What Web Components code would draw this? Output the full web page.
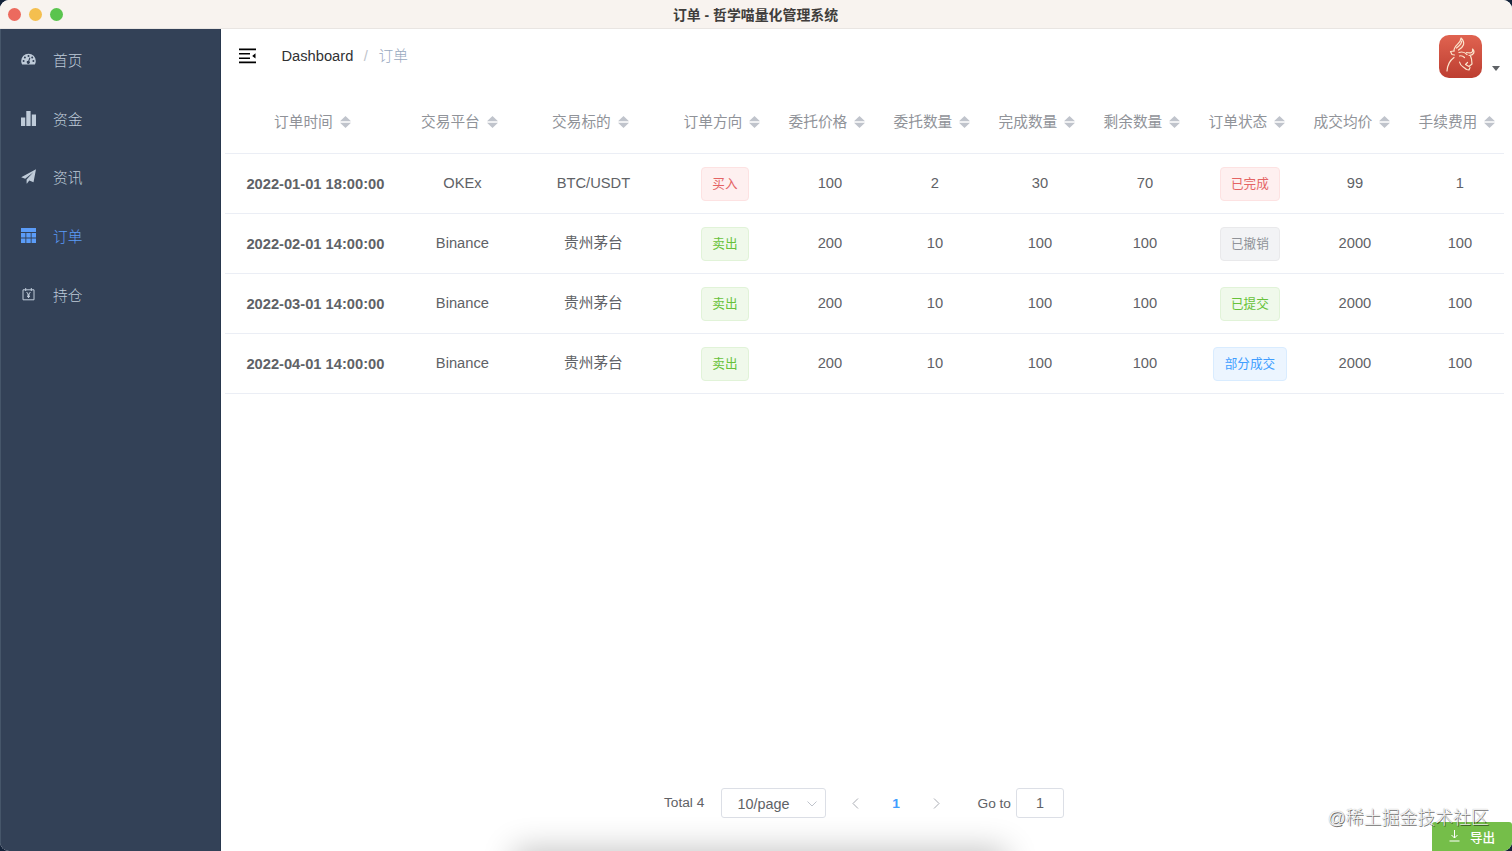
<!DOCTYPE html>
<html lang="zh">
<head>
<meta charset="utf-8">
<title>订单 - 哲学喵量化管理系统</title>
<style>
  html, body { margin: 0; height: 100%; overflow: hidden; background: #14233a; }
  body { font-family: "Liberation Sans", "Noto Sans CJK SC", sans-serif; font-size: 14.7px; color: #606266; }
</style>
</head>
<body>
<app-window>
  <title-bar slot="title">订单 - 哲学喵量化管理系统</title-bar>
  <side-menu slot="menu">
    <menu-item icon="dashboard">首页</menu-item>
    <menu-item icon="chart">资金</menu-item>
    <menu-item icon="plane">资讯</menu-item>
    <menu-item icon="grid" active>订单</menu-item>
    <menu-item icon="yen">持仓</menu-item>
  </side-menu>
  <nav-bar><span>Dashboard</span><span slot="current">订单</span></nav-bar>
  <order-table></order-table>
  <page-footer></page-footer>
  <export-button slot="float">导出</export-button>
  <water-mark slot="float">@稀土掘金技术社区</water-mark>
</app-window>

<script>
// clase base: monta el template en el shadow root
class BaseElement extends HTMLElement {
  constructor () {
    super();
    this.attachShadow({ mode: 'open' });
  }
  connectedCallback () {
    const template = document.createElement('template');
    template.innerHTML = `<style>${this.getStyles()}</style>${this.getTemplate()}`;
    this.shadowRoot.appendChild(template.content.cloneNode(true));
  }
}

class AppWindow extends BaseElement {
  getTemplate () {
    return `
      <slot name="title"></slot>
      <div class="body">
        <slot name="menu"></slot>
        <main><slot></slot></main>
      </div>
      <div class="shade"></div>
      <slot name="float"></slot>
    `;
  }
  getStyles () {
    return `
      :host { display: flex; flex-direction: column; height: 100vh; position: relative; overflow: hidden; border-radius: 9px; background: #fff; }
      .body { flex: 1; display: flex; min-height: 0; }
      main { flex: 1; min-width: 0; display: flex; flex-direction: column; }
      .shade { position: absolute; left: 522px; top: 857px; width: 476px; height: 30px; box-shadow: 0 0 32px 8px rgba(0,0,0,.24); }
    `;
  }
}

class TitleBar extends BaseElement {
  getTemplate () {
    return `
      <div class="dots"><i></i><i></i><i></i></div>
      <b><slot></slot></b>
      <div></div>
    `;
  }
  getStyles () {
    return `
      :host { display: grid; grid-template-columns: 1fr auto 1fr; align-items: center; height: 29px; box-sizing: border-box; padding: 0 9px 0 8px; background: #f8f3ef; border-bottom: 1px solid #e9e5e2; color: #403d3b; font-size: 13.900px; flex: none; }
      .dots { display: flex; gap: 8px; padding-top: 1px; }
      i { width: 13px; height: 13px; border-radius: 50%; background: #ec6a5e; }
      i:nth-child(2) { background: #f4bf4f; }
      i:nth-child(3) { background: #5ac44e; }
      b { line-height: 18px; padding-top: 1px; }
    `;
  }
}

class SideMenu extends BaseElement {
  getTemplate () { return '<slot></slot>'; }
  getStyles () {
    return `
      :host { display: flex; flex-direction: column; width: 221px; flex: none; box-sizing: border-box; padding-top: 2px; background: #334157; border-left: 1px solid #46566a; border-right: 1px solid #29384e; }
    `;
  }
}

const icons = {
  dashboard: '<path fill-rule="evenodd" d="M.2 9a7.3 7.3 0 0 1 14.6 0c0 1.6-.5 2.7-1 3.5H1.200C.7 11.700.2 10.600.2 9ZM7.500 3a1 1 0 1 0 0 2 1 1 0 0 0 0-2Zm-3.600 1.500a1 1 0 1 0 0 2 1 1 0 0 0 0-2ZM2.600 8a1 1 0 1 0 0 2 1 1 0 0 0 0-2Zm9.800 0a1 1 0 1 0 0 2 1 1 0 0 0 0-2ZM11.200 4.500a1 1 0 1 0 0 2 1 1 0 0 0 0-2ZM8.400 5.600 7.300 8.700a1.600 1.600 0 1 0 1 .3l1.100-3.100Z"/>',
  chart: '<path d="M0 6.500h4.200V15H0zM5.300 0h4.300v15H5.300zM10.800 3.500H15V15h-4.200z"/>',
  plane: '<path d="M15 .3 12.500 13.300 8.300 11.400 6 14.600 5.600 14.400V10.600L12.300 3.300 4.200 9.700.2 8.200Z"/>',
  grid: '<path d="M0 0h15v4H0zM0 5h4.400v4.500H0zM5.300 5h4.400v4.500H5.300zM10.600 5H15v4.500h-4.400zM0 10.500h4.400V15H0zM5.300 10.500h4.400V15H5.300zM10.600 10.500H15V15h-4.400z"/>',
  yen: '<path fill="none" stroke="currentColor" stroke-width="1" d="M2 2.800h11v10H2zM4.700 1v3M10.300 1v3M5.600 5l1.900 2.600L9.400 5M7.500 7.600V11M6 8h3M6 9.600h3"/>'
};

class MenuItem extends BaseElement {
  getTemplate () {
    return `
      <svg width="15" height="15" viewBox="0 0 15 15" fill="currentColor">${icons[this.getAttribute('icon')]}</svg>
      <span><slot></slot></span>
    `;
  }
  getStyles () {
    return `
      :host { display: flex; align-items: center; gap: 17px; height: 58.8px; padding-left: 20px; color: #bfcbd9; }
      :host([active]) { color: #5b9cf8; }
      svg { margin-top: -2px; }
      span { font-weight: 300; line-height: 22px; padding-top: 1px; }
    `;
  }
}

class NavBar extends BaseElement {
  getTemplate () {
    return `
      <svg class="fold" width="17" height="16" viewBox="0 0 17 16"><path d="M0 .5h17v1.700H0zM0 5h11v1.500H0zM0 9.400h11v1.500H0zM0 13.500h17v1.700H0zM16.500 5.200v5.400L13.200 8z"/></svg>
      <slot></slot>
      <i>/</i>
      <em><slot name="current"></slot></em>
      <svg class="avatar" width="43" height="43" viewBox="0 0 43 43">
        <defs><linearGradient id="g" x2="0" y2="1"><stop stop-color="#e06350"/><stop offset="1" stop-color="#bd3e31"/></linearGradient></defs>
        <rect width="43" height="43" rx="10" fill="url(#g)"/>
        <g fill="none" stroke="#fbe3cb" stroke-width="1.200" stroke-linecap="round" stroke-linejoin="round">
          <path d="M15 16C14.500 10 22 9 22 3 27 8 24.500 12 19.500 15M17.500 13C20 11 23 9 22.500 6"/>
          <path d="M15 16 11.500 16.500 13 19.500 15.500 20M15 22.500C10 26 8.500 30 8 36"/>
          <path d="M20 17.500C24 16 26 17.500 28 19.500M27.500 17.500C32 18.500 34.500 17.500 33.500 14 36.500 17 34.500 20.500 30 20.500"/>
          <path d="M20.500 21C22 20.500 24 21 25.500 22.500M31.500 21 32.500 24 33 29 30 31.500 26.500 29.500 28.500 27.500M20.500 27C21.500 32 25 31.500 27.500 34.500L30 35 31 32.500"/>
        </g>
      </svg>
      <svg class="caret" width="8" height="5" viewBox="0 0 8 5"><path d="M0 0h8L4 5z" fill="#5f6266"/></svg>
    `;
  }
  getStyles () {
    return `
      :host { display: flex; align-items: center; height: 54px; flex: none; padding: 0 12.500px 0 18px; color: #303133; }
      .fold { margin-right: 25.500px; }
      i { margin: 0 10.500px; color: #c0c4cc; font-style: normal; }
      em { color: #97a8be; font-style: normal; font-weight: 300; line-height: 22px; }
      .avatar { margin-left: auto; margin-right: 10px; }
      .caret { margin-top: 24px; }
    `;
  }
}

class StateTag extends BaseElement {
  getTemplate () { return '<slot></slot>'; }
  getStyles () {
    return `
      :host { display: inline-flex; align-items: center; box-sizing: border-box; height: 34px; padding: 0 10.500px; border: 1px solid #fde2e2; border-radius: 4px; background: #fef0f0; color: #e46464; font-size: 12.600px; }
      :host([type=success]) { background: #f0f9eb; border-color: #e1f3d8; color: #67c23a; }
      :host([type=info]) { background: #f2f3f5; border-color: #e9e9eb; color: #909399; }
      :host([type=primary]) { background: #ecf5ff; border-color: #d9ecff; color: #409eff; }
    `;
  }
}

const columns = ['订单时间', '交易平台', '交易标的', '订单方向', '委托价格', '委托数量', '完成数量', '剩余数量', '订单状态', '成交均价', '手续费用'];
const buy = '<state-tag>买入</state-tag>';
const sell = '<state-tag type="success">卖出</state-tag>';
const orders = [
  ['2022-01-01 18:00:00', 'OKEx', 'BTC/USDT', buy, 100, 2, 30, 70, '<state-tag>已完成</state-tag>', 99, 1],
  ['2022-02-01 14:00:00', 'Binance', '贵州茅台', sell, 200, 10, 100, 100, '<state-tag type="info">已撤销</state-tag>', 2000, 100],
  ['2022-03-01 14:00:00', 'Binance', '贵州茅台', sell, 200, 10, 100, 100, '<state-tag type="success">已提交</state-tag>', 2000, 100],
  ['2022-04-01 14:00:00', 'Binance', '贵州茅台', sell, 200, 10, 100, 100, '<state-tag type="primary">部分成交</state-tag>', 2000, 100]
];

class OrderTable extends BaseElement {
  getTemplate () {
    const sort = '<svg width="11" height="12" viewBox="0 0 11 12"><path d="M5.500 0 11 5.200H0zM0 6.800h11L5.500 12z" fill="#c0c4cc"/></svg>';
    const head = columns.map(c => `<div><span>${c}</span>${sort}</div>`).join('');
    const rows = orders.map(r => `<div class="row">${r.map(c => `<div>${c}</div>`).join('')}</div>`).join('');
    return `<div class="row head">${head}</div>${rows}`;
  }
  getStyles () {
    return `
      :host { display: block; flex: 1; margin: 7px 8px 0 4px; overflow: hidden; }
      .row { display: grid; grid-template-columns: 190px 104px 158px repeat(8, 105px); width: 1292px; height: 60px; box-sizing: border-box; margin-left: -4.600px; border-bottom: 1px solid #ebeef5; }
      .row > div { display: flex; align-items: center; justify-content: center; padding-bottom: 1px; line-height: 22px; }
      .row:not(.head) > div:first-child { font-weight: bold; padding: 0; }
      .row > div:has(state-tag) { padding: 0; }
      .head { height: 64px; color: #909399; }
      .row.head > div { padding: 1px 0 0; }
      .head svg { margin: 0 6px 0 7px; }
    `;
  }
}

class PageFooter extends BaseElement {
  getTemplate () {
    return `
      <span class="total">Total 4</span>
      <div class="box size">10/page<svg width="10" height="6" viewBox="0 0 10 6"><path d="M.5.5 5 5 9.500.5"/></svg></div>
      <svg width="7" height="11" viewBox="0 0 7 11"><path d="M6 .5 1 5.500l5 5"/></svg>
      <b>1</b>
      <svg width="7" height="11" viewBox="0 0 7 11"><path d="M1 .5l5 5-5 5"/></svg>
      <span class="goto">Go to</span>
      <div class="box jump">1</div>
    `;
  }
  getStyles () {
    return `
      :host { display: flex; align-items: center; height: 30px; flex: none; margin-bottom: 33px; padding-left: 443px; font-size: 13.700px; }
      svg { fill: none; stroke: #a8abb2; }
      .box { display: flex; align-items: center; box-sizing: border-box; height: 30px; border: 1px solid #dcdfe6; border-radius: 3px; }
      .total { width: 56.500px; padding-bottom: 1px; }
      .size { width: 105px; padding: 1px 8px 0 16px; justify-content: space-between; margin-right: 26.500px; font-size: 14.400px; }
      .size svg { stroke: #c0c4cc; }
      b { width: 74px; text-align: center; color: #409eff; }
      .goto { margin: 0 5px 0 37.500px; padding-top: 1px; }
      .jump { width: 48px; justify-content: center; font-size: 14.400px; }
    `;
  }
}

class ExportButton extends BaseElement {
  getTemplate () {
    return `
      <svg width="11" height="12" viewBox="0 0 11 12"><path d="M5.500 0v8M2.500 5l3 3 3-3M.5 11h10" fill="none" stroke="#fff"/></svg>
      <slot></slot>
    `;
  }
  getStyles () {
    return `
      :host { position: absolute; right: 0; bottom: 0; display: flex; align-items: center; gap: 10px; box-sizing: border-box; width: 80px; height: 29px; padding: 0 0 1px 17px; border-radius: 3px 3px 0 0; background: #75be49; color: #fff; font-size: 12.600px; font-weight: 500; }
    `;
  }
}

class WaterMark extends BaseElement {
  getTemplate () { return '<slot></slot>'; }
  getStyles () {
    return `
      :host { position: absolute; right: 23px; top: 804.5px; font-size: 17.900px; line-height: 27px; font-weight: 300; color: rgba(255,255,255,.9); text-shadow: .8px .8px .6px rgba(0,0,0,.55), 0 0 1px rgba(0,0,0,.4); white-space: nowrap; }
    `;
  }
}

customElements.define('app-window', AppWindow);
customElements.define('title-bar', TitleBar);
customElements.define('side-menu', SideMenu);
customElements.define('menu-item', MenuItem);
customElements.define('nav-bar', NavBar);
customElements.define('state-tag', StateTag);
customElements.define('order-table', OrderTable);
customElements.define('page-footer', PageFooter);
customElements.define('export-button', ExportButton);
customElements.define('water-mark', WaterMark);
</script>
</body>
</html>
